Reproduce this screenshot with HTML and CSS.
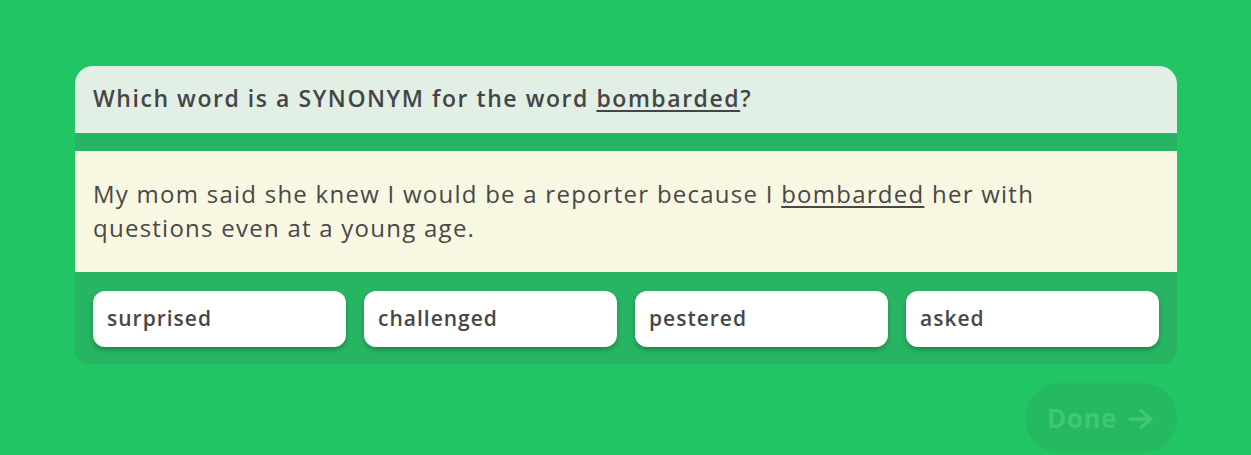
FILE: index.html
```html
<!DOCTYPE html>
<html>
<head>
<meta charset="utf-8">
<link rel="stylesheet" href="styles.css">
</head>
<body>
<div class="page">
  <div class="card">
    <div class="question">Which word is a SYNONYM for the word <u>bombarded</u>?</div>
    <div class="passage">My mom said she knew I would be a reporter because I <u>bombarded</u> her with questions even at a young age.</div>
    <div class="options">
      <div class="option">surprised</div>
      <div class="option">challenged</div>
      <div class="option">pestered</div>
      <div class="option">asked</div>
    </div>
  </div>
  <div class="footer">
    <div class="done">Done
      <svg class="arrow" width="28" height="24" viewBox="0 0 28 24"><path d="M3 12 H24 M14 3.5 L24 12 L14 20.5" fill="none" stroke="currentColor" stroke-width="3.4" stroke-linecap="round" stroke-linejoin="round"/></svg>
    </div>
  </div>
</div>
</body>
</html>
```
FILE: styles.css
```css
html, body {
  margin: 0;
  padding: 0;
  background: #22c564;
}
body {
  font-family: "Open Sans", "Liberation Sans", sans-serif;
  color: #444;
}
.page {
  padding: 66px 74px 0 75px;
}
.card {
  background: #28b563;
  border-radius: 18px 18px 14px 14px;
  overflow: hidden;
  display: flex;
  flex-direction: column;
  padding-bottom: 17px;
}
.question {
  background: #e1efe5;
  height: 67px;
  line-height: 65px;
  padding: 0 18px;
  font-size: 23px;
  font-weight: 600;
  letter-spacing: 1.55px;
  color: #454545;
  white-space: nowrap;
}
.question u, .passage u {
  text-underline-offset: 3px;
  text-decoration-thickness: 1.5px;
}
.passage {
  background: #f8f7e1;
  margin-top: 18px;
  padding: 26px 100px 27px 18px;
  font-size: 24px;
  line-height: 34px;
  color: #484848;
  letter-spacing: 1.25px;
}
.options {
  display: flex;
  gap: 18px;
  padding: 19px 18px 0 18px;
}
.option {
  flex: 1;
  height: 56px;
  background: #fff;
  border-radius: 12px;
  box-shadow: 0 3px 5px rgba(0,0,0,0.25);
  display: flex;
  align-items: center;
  padding: 0 14px 3px;
  box-sizing: border-box;
  font-size: 21px;
  font-weight: 600;
  letter-spacing: 1px;
  color: #474747;
}
.footer {
  display: flex;
  justify-content: flex-end;
  padding-top: 19px;
}
.done {
  width: 152px;
  height: 70px;
  border-radius: 35px;
  background: #25b962;
  color: #3fc772;
  font-family: "Open Sans", sans-serif;
  font-weight: 700;
  font-size: 26px;
  letter-spacing: 0.5px;
  display: flex;
  align-items: center;
  justify-content: center;
  gap: 10px;
}
.arrow { margin-top: 2px; }
```
